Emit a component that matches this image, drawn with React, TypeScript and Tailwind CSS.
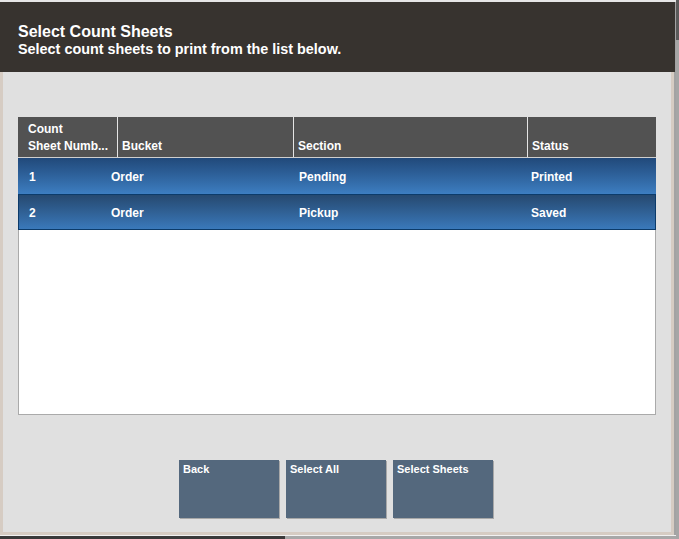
const rows = [
  { num: "1", bucket: "Order", section: "Pending", status: "Printed", focused: false },
  { num: "2", bucket: "Order", section: "Pickup", status: "Saved", focused: true },
];

const buttons = ["Back", "Select All", "Select Sheets"];

export default function App() {
  return (
    <div className="flex h-[539px] w-[679px] overflow-hidden bg-[#a3a3a3] font-['Liberation_Sans',Arial,sans-serif] font-bold text-white">
      <div className="flex h-[539px] w-[676px] flex-col">
        <div className="h-[2px] bg-[#e6e6e6]" />
        {/* header */}
        <div className="flex h-[70px] w-[675px] flex-col bg-[#37332f] pl-[18px] pt-[21px]">
          <div className="text-[16px] leading-[18px]">Select Count Sheets</div>
          <div className="text-[14.4px] leading-[16px]">Select count sheets to print from the list below.</div>
        </div>

        <div className="flex h-[463px] w-[674px] flex-col border-x-[3px] border-b-[3px] border-[#d6ccc3] bg-[#e0e0e0] px-[15px] pt-[45px]">
          {/* table */}
          <div className="flex w-[638px] flex-col">
            <div className="grid h-[41px] grid-cols-[100px_176px_234px_1fr] border-b border-[#cfcfcf] bg-[#525252] text-[12px] leading-[17px]">
              <div className="flex flex-col justify-end border-r border-[#e4e4e4] pb-[2px] pl-[10px]">
                <span>Count</span>
                <span>Sheet Numb...</span>
              </div>
              <div className="flex items-end border-r border-[#e4e4e4] pb-[2px] pl-[4px]">Bucket</div>
              <div className="flex items-end border-r border-[#e4e4e4] pb-[2px] pl-[4px]">Section</div>
              <div className="flex items-end pb-[2px] pl-[4px]">Status</div>
            </div>
            <div className="flex h-[257px] flex-col border-x border-b border-[#aaaaaa] bg-white">
              {rows.map((r) => (
                <div
                  key={r.num}
                  className={
                    r.focused
                      ? "-mx-px grid h-[36px] grid-cols-[82px_188px_232px_1fr] items-center border border-[#0c3b6a] bg-linear-to-b from-[#264970] to-[#3a79bb] pl-[10px] pt-[2px] text-[12px]"
                      : "-mx-px grid h-[36px] grid-cols-[82px_188px_232px_1fr] items-center bg-linear-to-b from-[#21497a] to-[#3d7ec1] pl-[11px] pt-[2px] text-[12px]"
                  }
                >
                  <span>{r.num}</span>
                  <span>{r.bucket}</span>
                  <span>{r.section}</span>
                  <span>{r.status}</span>
                </div>
              ))}
            </div>
          </div>

          {/* buttons */}
          <div className="mt-[45px] flex justify-center gap-[7px] pr-[2px]">
            {buttons.map((b) => (
              <div
                key={b}
                className="h-[58px] w-[100px] bg-[#54687d] pl-[4px] pt-[2px] text-[11px] leading-[14px] shadow-[1px_1px_0_#a8a8a8]"
              >
                {b}
              </div>
            ))}
          </div>
        </div>

        <div className="h-[1px] w-[676px] bg-[#f2f2f2]" />
        <div className="flex h-[3px]">
          <div className="w-[285px] bg-[#3a3a3a]" />
          <div className="flex-1 bg-[#a8a8a8]" />
        </div>
      </div>
      {/* scrollbar strip */}
      <div className="flex w-[3px] flex-col">
        <div className="h-[40px] bg-[#5a5a5a]" />
        <div className="flex-1 bg-[#a6a6a6]" />
      </div>
    </div>
  );
}
